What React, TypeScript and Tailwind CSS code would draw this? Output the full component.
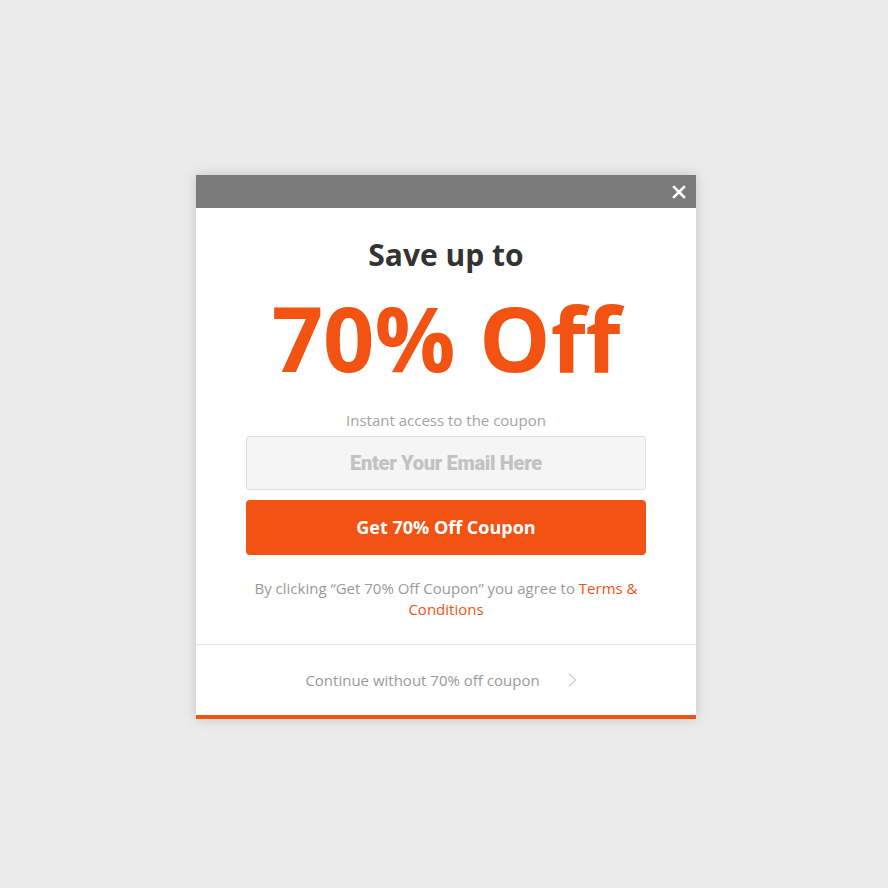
import React from 'react';

const App: React.FC = () => {
  return (
    <div className="min-h-screen w-full bg-[#ececec] flex justify-center pt-[175px] pl-[4px] font-['Open_Sans',sans-serif]">
      <div className="w-[500px] h-fit bg-white shadow-[0_0_12px_rgba(0,0,0,0.18)]">
        <div className="h-[33px] bg-[#7a7a7a] flex items-center justify-end pr-[10px]">
          <svg width="14" height="14" viewBox="0 0 14 14">
            <path d="M2 2 L12 12 M12 2 L2 12" stroke="#fff" strokeWidth="2.6" strokeLinecap="square" />
          </svg>
        </div>

        <div className="flex flex-col items-center px-[50px]">
          <h2 className="mt-[27px] text-[30px] leading-[40px] font-bold text-[#333]">Save up to</h2>
          <div className="mt-[10px] text-[90px] leading-[104px] font-bold text-[#f25212]">70% Off</div>
          <p className="mt-[21px] text-[15px] leading-[20px] text-[#a3a3a3]">Instant access to the coupon</p>
          <div className="mt-[6px] w-full h-[54px] bg-[#f5f5f5] border border-[#dedede] rounded-[3px] flex items-center justify-center">
            <span className="font-['Roboto',sans-serif] font-black text-[20px] text-[#c2c2c2] tracking-[-0.3px]">Enter Your Email Here</span>
          </div>
          <button className="mt-[10px] w-full h-[55px] bg-[#f25212] rounded-[4px] text-white text-[18px] font-bold">
            Get 70% Off Coupon
          </button>
          <p className="mt-[23px] text-center text-[15px] leading-[21px] text-[#9a9a9a]">
            By clicking “Get 70% Off Coupon” you agree to <span className="text-[#f25212]">Terms &amp; Conditions</span>
          </p>
        </div>

        <div className="mt-[24px] border-t border-[#e6e6e6] h-[71px] flex items-center justify-center gap-[27px] pr-[10px]">
          <span className="text-[15px] text-[#9a9a9a]">Continue without 70% off coupon</span>
          <svg width="10" height="16" viewBox="0 0 10 16">
            <path d="M2 1.5 L8.5 8 L2 14.5" fill="none" stroke="#a8a8a8" strokeWidth="1" />
          </svg>
        </div>
        <div className="h-[4px] bg-[#f25212]" />
      </div>
    </div>
  );
};

export default App;
